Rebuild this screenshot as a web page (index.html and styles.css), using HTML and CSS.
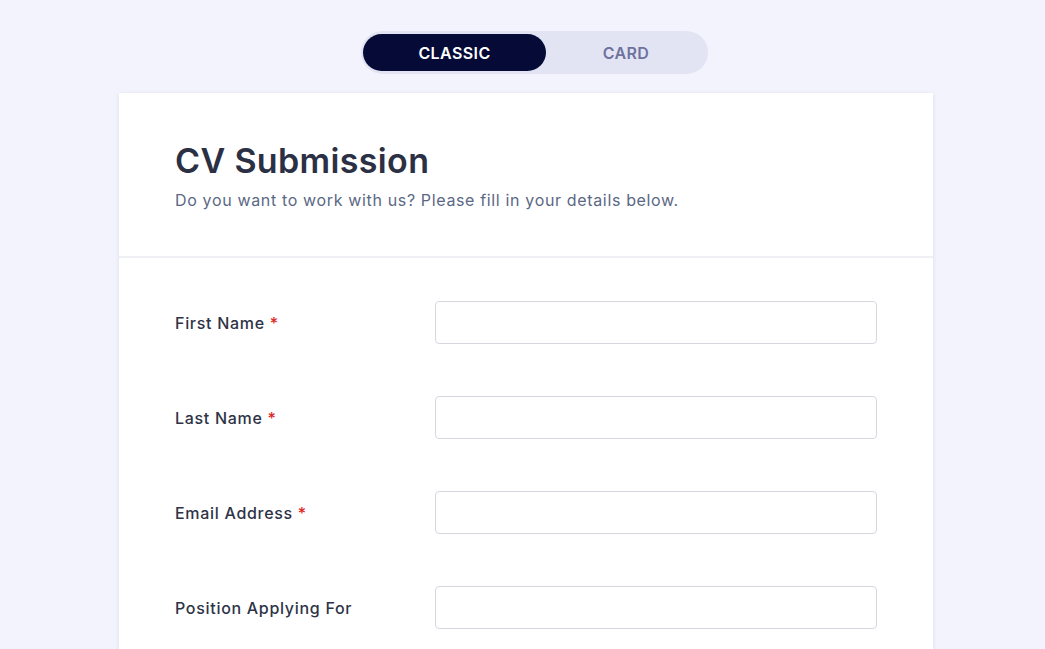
FILE: index.html
```html
<!DOCTYPE html>
<html lang="en">
<head>
<meta charset="utf-8">
<title>CV Submission</title>
<link rel="stylesheet" href="styles.css">
</head>
<body>
<div class="page">
  <div class="toggle">
    <button class="toggle-btn active">CLASSIC</button>
    <button class="toggle-btn">CARD</button>
  </div>
  <div class="card">
    <div class="card-header">
      <h1 class="title">CV Submission</h1>
      <p class="subtitle">Do you want to work with us? Please fill in your details below.</p>
    </div>
    <div class="card-body">
      <div class="row">
        <label class="label">First Name <span class="req">*</span></label>
        <input class="input" type="text">
      </div>
      <div class="row">
        <label class="label">Last Name <span class="req">*</span></label>
        <input class="input" type="text">
      </div>
      <div class="row">
        <label class="label">Email Address <span class="req">*</span></label>
        <input class="input" type="text">
      </div>
      <div class="row">
        <label class="label">Position Applying For</label>
        <input class="input" type="text">
      </div>
    </div>
  </div>
</div>
</body>
</html>
```
FILE: styles.css
```css
* { box-sizing: border-box; }
html, body { margin: 0; padding: 0; }
body {
  background: #f3f3fd;
  font-family: Inter, "Noto Sans", sans-serif;
  height: 649px;
  overflow: hidden;
}
.page {
  display: flex;
  flex-direction: column;
  padding-top: 31px;
}
.toggle {
  display: flex;
  align-self: flex-start;
  margin-left: 361px;
  width: 347px;
  height: 43px;
  padding: 3px 2px;
  background: #e3e4f3;
  border-radius: 22px;
}
.toggle-btn {
  border: none;
  background: transparent;
  font-family: Inter, sans-serif;
  font-weight: 600;
  font-size: 16px;
  letter-spacing: 0.4px;
  color: #6e729f;
  flex: 1;
  border-radius: 19px;
  padding: 0;
  cursor: pointer;
}
.toggle-btn.active {
  flex: 0 0 183px;
  background: #050b36;
  color: #ffffff;
}
.card {
  margin-top: 19px;
  margin-left: 119px;
  width: 814px;
  background: #ffffff;
  box-shadow: 0 1px 4px rgba(40, 40, 90, 0.10);
  min-height: 600px;
}
.card-header {
  padding: 46px 56px 0;
  height: 165px;
  border-bottom: 2px solid #eef0f5;
}
.title {
  margin: 0;
  font-size: 34px;
  font-weight: 600;
  color: #2b3044;
  line-height: 44px;
  letter-spacing: 0.35px;
}
.subtitle {
  margin: 7px 0 0;
  font-size: 16px;
  letter-spacing: 0.65px;
  color: #5b6884;
  line-height: 20px;
}
.card-body {
  padding: 43px 56px 0;
  display: flex;
  flex-direction: column;
  gap: 52px;
}
.row {
  display: flex;
  align-items: center;
}
.label {
  width: 260px;
  font-size: 16px;
  font-weight: 500;
  letter-spacing: 0.7px;
  color: #2e3346;
}
.req { color: #e02424; }
.input {
  width: 442px;
  height: 43px;
  border: 1px solid #d5d8df;
  border-radius: 4px;
  background: #fff;
}
```
